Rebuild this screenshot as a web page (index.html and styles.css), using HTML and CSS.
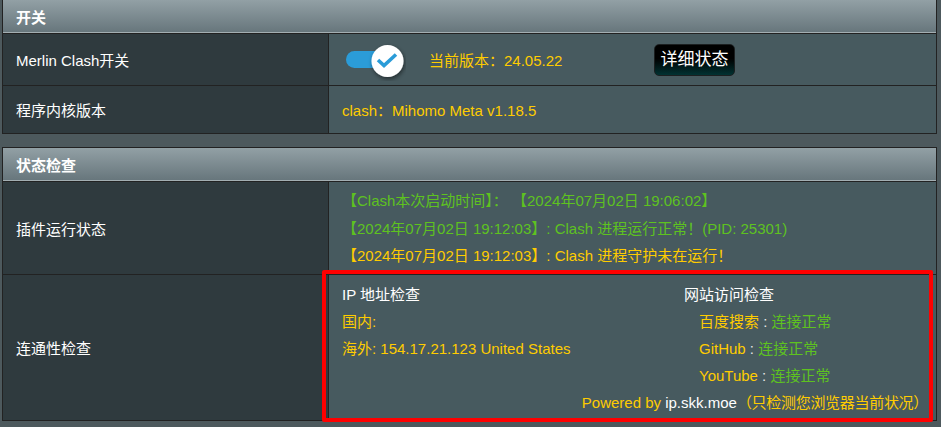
FILE: index.html
```html
<!DOCTYPE html>
<html lang="zh-CN">
<head>
<meta charset="utf-8">
<title>Merlin Clash</title>
<link rel="stylesheet" href="styles.css">
</head>
<body>
<section class="panel panel-first">
  <div class="panel-head">开关</div>
  <div class="row row-switch">
    <div class="row-label">Merlin Clash开关</div>
    <div class="row-value value-switch">
      <svg class="toggle" width="60" height="42" viewBox="0 0 60 42">
        <defs>
          <filter id="ks" x="-40%" y="-40%" width="180%" height="180%">
            <feDropShadow dx="1" dy="2" stdDeviation="2" flood-color="#000" flood-opacity="0.5"/>
          </filter>
        </defs>
        <rect x="0" y="12" width="44" height="17" rx="8.5" fill="#2b9cd8"/>
        <circle cx="41.5" cy="22" r="16" fill="#fff" filter="url(#ks)"/>
        <path d="M32 21 L38 26.5 L50 15.5" fill="none" stroke="#2b9cd8" stroke-width="3.6"/>
      </svg>
      <span class="version">当前版本：24.05.22</span>
      <button class="btn-detail" type="button">详细状态</button>
    </div>
  </div>
  <div class="row row-core">
    <div class="row-label">程序内核版本</div>
    <div class="row-value value-core"><span class="yellow">clash：Mihomo Meta v1.18.5</span></div>
  </div>
</section>

<section class="panel panel-second">
  <div class="panel-head">状态检查</div>
  <div class="row row-status">
    <div class="row-label">插件运行状态</div>
    <div class="row-value value-status">
      <div class="line green">【Clash本次启动时间】： 【2024年07月02日 19:06:02】</div>
      <div class="line green">【2024年07月02日 19:12:03】: Clash 进程运行正常！(PID: 25301)</div>
      <div class="line yellow">【2024年07月02日 19:12:03】: Clash 进程守护未在运行！</div>
    </div>
  </div>
  <div class="row row-conn">
    <div class="row-label">连通性检查</div>
    <div class="row-value value-conn">
      <div class="conn-grid">
        <div class="conn-col">
          <div class="line white">IP 地址检查</div>
          <div class="line yellow">国内:</div>
          <div class="line yellow">海外: 154.17.21.123 United States</div>
        </div>
        <div class="conn-col">
          <div class="line white">网站访问检查</div>
          <div class="line item"><span class="yellow">百度搜索</span><span class="sep"> : </span><span class="green">连接正常</span></div>
          <div class="line item"><span class="yellow">GitHub</span><span class="sep"> : </span><span class="green">连接正常</span></div>
          <div class="line item"><span class="yellow">YouTube</span><span class="sep"> : </span><span class="green">连接正常</span></div>
        </div>
      </div>
      <div class="line powered"><span class="yellow">Powered by </span><span class="white">ip.skk.moe</span><span class="yellow paren">（只检测您浏览器当前状况）</span></div>
    </div>
  </div>
</section>

<div class="highlight"></div>
</body>
</html>
```

FILE: styles.css
```css
html, body {
  margin: 0;
  padding: 0;
}

body {
  background: #4d595d;
  font-family: "Liberation Sans", "Noto Sans CJK SC", sans-serif;
  font-size: 15px;
  color: #fff;
  width: 941px;
  height: 427px;
  overflow: hidden;
}

.panel {
  margin: 0 4px 0 2px;
  border: 1px solid #222;
}

.panel-first {
  border-top: none;
}

.panel-second {
  margin-top: 13px;
}

.panel-head {
  height: 34px;
  box-sizing: border-box;
  display: flex;
  align-items: center;
  padding-left: 13px;
  font-weight: bold;
  color: #fff;
  background: linear-gradient(#92a0a5 0%, #66757b 100%);
  border-bottom: 1px solid #222;
  box-shadow: inset 0 -1px 0 #a3aeb2;
}

.row {
  display: grid;
  grid-template-columns: 326px 1fr;
}

.row + .row {
  border-top: 1px solid #222;
}

.row-label {
  background: #2f3a3e;
  border-right: 1px solid #222;
  padding-left: 13px;
  display: flex;
  align-items: center;
}

.row-value {
  background: #475a5f;
}

.row-switch {
  height: 51px;
}

.row-core {
  height: 47px;
}

.row-status {
  height: 92px;
}

.row-conn {
  height: 145px;
}

.value-switch {
  display: flex;
  align-items: center;
  padding-left: 17px;
}

.toggle {
  display: block;
  width: 60px;
  height: 42px;
}

.version {
  color: #ffcc00;
  margin-left: 23px;
  width: 225px;
}

.btn-detail {
  width: 81px;
  height: 32px;
  padding: 0;
  border: 1px solid #1b1f20;
  border-radius: 5px;
  background: linear-gradient(#000 0%, #000 45%, #013232 100%);
  color: #fff;
  font-family: "Liberation Sans", "Noto Sans CJK SC", sans-serif;
  font-size: 17px;
  line-height: 30px;
  margin-top: 1px;
}

.value-core {
  display: flex;
  align-items: center;
  padding-left: 13px;
}

.value-status {
  padding: 5px 13px 0 13px;
}

.value-status .line {
  line-height: 27.5px;
  white-space: nowrap;
}

.value-conn {
  padding: 6px 14px 0 13px;
}

.conn-grid {
  display: grid;
  grid-template-columns: 342px 1fr;
}

.value-conn .line {
  line-height: 27px;
  white-space: nowrap;
}

.item {
  padding-left: 15px;
}

.sep {
  color: #e6e6e6;
}

.powered {
  text-align: right;
  margin-right: -6px;
}

.paren {
  letter-spacing: -0.3px;
}

.yellow {
  color: #ffcc00;
}

.green {
  color: #5ec21f;
}

.white {
  color: #fff;
}

.highlight {
  position: absolute;
  left: 322px;
  top: 270px;
  width: 611px;
  height: 152px;
  box-sizing: border-box;
  border: 4px solid #ff0000;
  border-radius: 2px;
  pointer-events: none;
}
```
